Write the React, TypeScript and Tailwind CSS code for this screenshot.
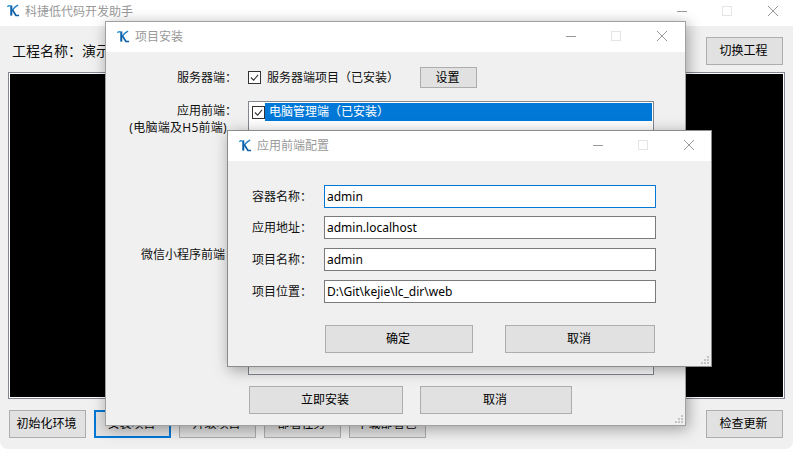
import React from 'react';

const FONT = "font-['Noto_Sans','Noto_Sans_CJK_SC',sans-serif]";

// full-width punctuation, as the app prints it
const COLON = '\uFF1A';
const LP = '\uFF08';
const RP = '\uFF09';

const KLogo = () => (
  <svg width="13" height="13" viewBox="0 0 14 14" className="shrink-0">
    <path d="M0.5 3.2C1.2 1.8 2.6 1.6 3.6 2.2" fill="none" stroke="#2e9bd6" strokeWidth="1.6" />
    <path d="M4.6 1.5V12.5" fill="none" stroke="#0b5fa8" strokeWidth="2.2" />
    <path d="M12 1.2C9.6 2 7.6 4 5.6 6.6" fill="none" stroke="#1a7cc4" strokeWidth="1.4" />
    <path d="M5.8 6.2L9.6 12.4H13" fill="none" stroke="#0b5fa8" strokeWidth="1.8" />
  </svg>
);

const Caption = () => (
  <div className="flex items-center gap-[35px]">
    <svg width="10" height="10" viewBox="0 0 10 10">
      <path d="M0 5.5H10" stroke="#999999" strokeWidth="1" />
    </svg>
    <svg width="10" height="10" viewBox="0 0 10 10">
      <rect x="0.5" y="0.5" width="9" height="9" fill="none" stroke="#e5e5e5" strokeWidth="1" />
    </svg>
    <svg width="10" height="10" viewBox="0 0 10 10" className="ml-px">
      <path d="M0 0L10 10M10 0L0 10" stroke="#999999" strokeWidth="1" />
    </svg>
  </div>
);

const Grip = () => (
  <svg width="8" height="8" viewBox="0 0 8 8" className="absolute right-[2px] bottom-[2px]">
    <g fill="#c4c4c4">
      <rect x="6" y="0" width="2" height="2" />
      <rect x="3" y="3" width="2" height="2" />
      <rect x="6" y="3" width="2" height="2" />
      <rect x="0" y="6" width="2" height="2" />
      <rect x="3" y="6" width="2" height="2" />
      <rect x="6" y="6" width="2" height="2" />
    </g>
  </svg>
);

const Check = () => (
  <span className="flex h-[13px] w-[13px] shrink-0 items-center justify-center border border-[#333333] bg-white">
    <svg width="9" height="9" viewBox="0 0 10 10">
      <path d="M1 5L4 8L9 2" fill="none" stroke="#333333" strokeWidth="1.2" />
    </svg>
  </span>
);

const Btn = ({ label, className = '' }: { label: string; className?: string }) => (
  <button className={`flex shrink-0 items-center justify-center border border-[#adadad] bg-[#e1e1e1] pr-[2px] text-[12px] text-black ${className}`}>
    {label}
  </button>
);

const Field = ({ label, value, focused, className = '' }: { label: string; value: string; focused?: boolean; className?: string }) => (
  <div className={`flex h-[23px] items-center ${className}`}>
    <span className="ml-[-1px] w-[72px] shrink-0 text-[12px] text-[#111111]">{label}{COLON}</span>
    <div className={`flex h-[23px] w-[332px] items-center border bg-white px-[2px] text-[12px] text-black ${focused ? 'border-[#0078d7]' : 'border-[#7a7a7a]'}`}>
      {value}
    </div>
  </div>
);

const TitleBar = ({ title, className }: { title: string; className: string }) => (
  <div className={`flex shrink-0 items-center justify-between bg-white ${className}`}>
    <div className="flex items-center gap-[5px]">
      <KLogo />
      <span className="mt-[2px] text-[12px] text-[#999999]">{title}</span>
    </div>
    <Caption />
  </div>
);

export default function App() {
  return (
    <div className={`relative h-[449px] w-[793px] overflow-hidden bg-white ${FONT}`}>
      {/* main window */}
      <div className="flex h-full flex-col overflow-hidden rounded-b-lg bg-[#f0f0f0]">
        <TitleBar title="科捷低代码开发助手" className="h-[26px] pb-[5px] pl-[7px] pr-[15px]" />
        <div className="flex h-[46px] shrink-0 items-start justify-between pl-[12px] pr-[10px]">
          <span className="pt-[14px] text-[14px] text-[#111111]">工程名称{COLON}演示项目</span>
          <Btn label="切换工程" className="mt-[11px] h-[28px] w-[77px]" />
        </div>
        <div className="mx-[8px] h-[327px] border border-[#828790] bg-white p-px">
          <div className="h-full w-full bg-black" />
        </div>
        <div className="mt-[11px] flex items-start justify-between pl-[9px] pr-[10px]">
          <div className="flex gap-[8px]">
            <Btn label="初始化环境" className="h-[28px] w-[77px]" />
            <Btn label="安装项目" className="h-[28px] w-[77px] border-2 !border-[#0078d7]" />
            <Btn label="升级项目" className="h-[28px] w-[77px]" />
            <Btn label="部署任务" className="h-[28px] w-[77px]" />
            <Btn label="下载部署包" className="h-[28px] w-[77px]" />
          </div>
          <Btn label="检查更新" className="h-[28px] w-[77px]" />
        </div>
      </div>

      {/* project install dialog */}
      <div className="absolute left-[105px] top-[21px] flex h-[405px] w-[581px] flex-col border border-[#a0a0a0] bg-[#f0f0f0] shadow-[2px_3px_14px_rgba(0,0,0,0.35)]">
        <TitleBar title="项目安装" className="h-[30px] pb-[2px] pl-[11px] pr-[18px]" />
        <div className="mt-[15px] flex h-[21px] items-center">
          <span className="w-[131px] shrink-0 text-right text-[12px] text-[#111111]">服务器端{COLON}</span>
          <div className="ml-[11px] flex items-center gap-[6px]">
            <Check />
            <span className="w-[153px] text-[12px] text-[#111111]">服务器端项目{LP}已安装{RP}</span>
          </div>
          <Btn label="设置" className="h-[21px] w-[57px]" />
        </div>
        <div className="mt-[13px] flex">
          <div className="flex w-[131px] shrink-0 flex-col items-end text-[12px] leading-[17px] text-[#111111]">
            <span className="mt-[1px]">应用前端{COLON}</span>
            <span className="mr-[10px] tracking-[0.27px]">(电脑端及H5前端)</span>
            <span className="mt-[110px]">微信小程序前端{COLON}</span>
          </div>
          <div className="ml-[11px] h-[274px] w-[406px] border border-[#828790] bg-white p-px">
            <div className="flex items-center pl-[2px]">
              <Check />
              <span className="flex h-[18px] flex-1 items-center bg-[#0078d7] pl-[4px] text-[12px] text-white">电脑管理端{LP}已安装{RP}</span>
            </div>
          </div>
        </div>
        <div className="mt-[11px] ml-[143px] flex gap-[17px]">
          <Btn label="立即安装" className="h-[28px] w-[154px]" />
          <Btn label="取消" className="h-[28px] w-[152px]" />
        </div>
        <Grip />
      </div>

      {/* front-end config dialog */}
      <div className="absolute left-[227px] top-[130px] flex h-[237px] w-[485px] flex-col border border-[#8c8c8c] bg-[#f0f0f0] shadow-[2px_3px_14px_rgba(0,0,0,0.35)]">
        <TitleBar title="应用前端配置" className="h-[30px] pb-[2px] pl-[11px] pr-[17px]" />
        <div className="mt-[24px] flex flex-col gap-[9px] pl-[25px]">
          <Field label="容器名称" value="admin" focused className="mb-[-1px]" />
          <Field label="应用地址" value="admin.localhost" />
          <Field label="项目名称" value="admin" />
          <Field label="项目位置" value="D:\Git\kejie\lc_dir\web" />
        </div>
        <div className="mt-[22px] ml-[97px] flex gap-[32px]">
          <Btn label="确定" className="h-[28px] w-[148px]" />
          <Btn label="取消" className="h-[28px] w-[150px]" />
        </div>
        <Grip />
      </div>
    </div>
  );
}
